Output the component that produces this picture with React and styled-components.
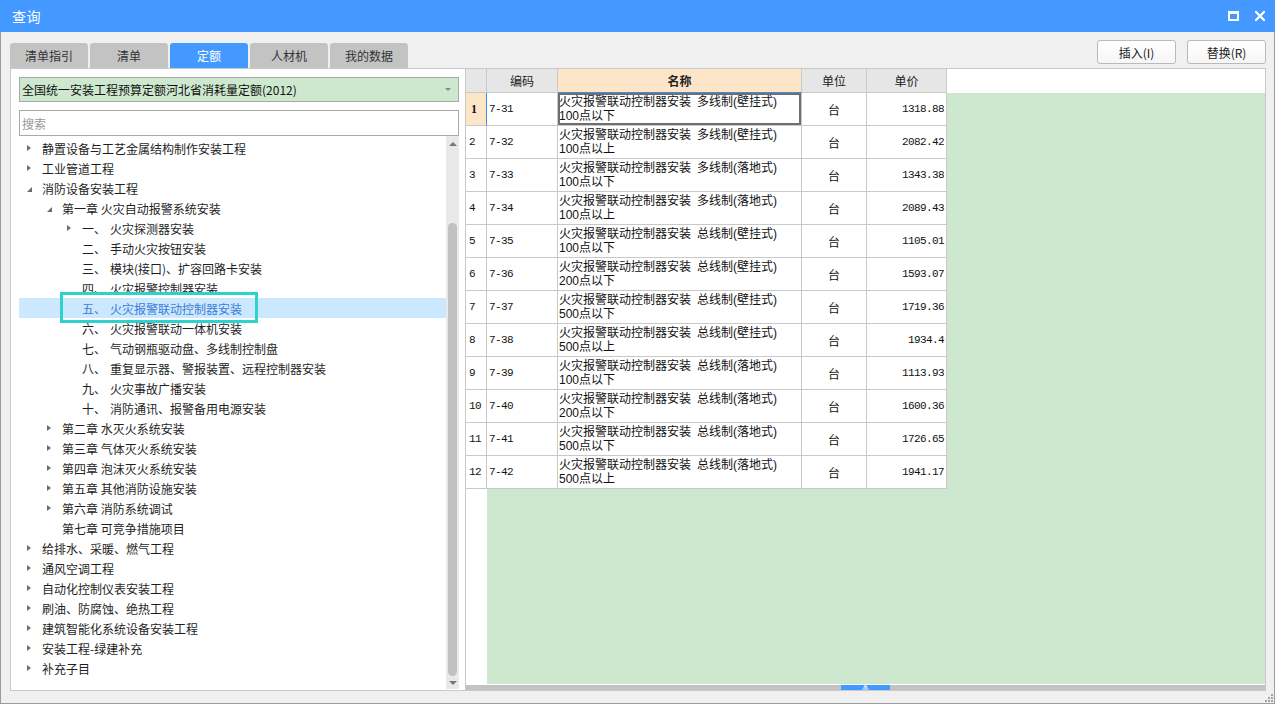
import React from "react";
import styled, { createGlobalStyle, css } from "styled-components";

const GlobalStyle = createGlobalStyle`
  html, body { margin: 0; padding: 0; background: #f0f0f0; }
  body {
    width: 1275px; height: 704px; overflow: hidden;
    font-family: "Noto Sans CJK SC", "Noto Sans", sans-serif;
    font-size: 12px; color: #222;
  }
  * { box-sizing: border-box; }
`;

const Window = styled.div`
  width: 1275px;
  height: 704px;
  display: flex;
  flex-direction: column;
  background: #f0f0f0;
  border: 1px solid #9c9c9c;
  border-top: none;
`;

const TitleBar = styled.div`
  height: 32px;
  flex: none;
  background: #4399ff;
  display: flex;
  align-items: center;
  justify-content: space-between;
  padding: 0 8px 0 12px;
  color: #fff;
  margin: 0 -1px;
`;

const TitleText = styled.div`
  font-size: 14px;
  color: #fff;
  letter-spacing: 0.5px;
`;

const TitleIcons = styled.div`
  display: flex;
  align-items: center;
  gap: 16px;
  padding-right: 2px;
`;

const Body = styled.div`
  flex: 1;
  display: flex;
  flex-direction: column;
  padding: 0 8px 0 9px;
  min-height: 0;
`;

const TopRow = styled.div`
  height: 36px;
  flex: none;
  display: flex;
  align-items: flex-end;
  justify-content: space-between;
`;

const Tabs = styled.div`
  display: flex;
  gap: 2px;
`;

const Tab = styled.div`
  width: 78px;
  height: 25px;
  border-radius: 3px 3px 0 0;
  display: flex;
  align-items: center;
  justify-content: center;
  font-size: 12px;
  background: #c3c3c3;
  color: #333;
  ${(p) =>
    p.$active &&
    css`
      background: #4399ff;
      color: #fff;
    `}
`;

const Buttons = styled.div`
  display: flex;
  gap: 11px;
  margin-bottom: 4px;
`;

const Button = styled.div`
  width: 79px;
  height: 24px;
  border: 1px solid #bababa;
  border-radius: 3px;
  background: linear-gradient(#ffffff, #f6f6f6);
  display: flex;
  align-items: center;
  justify-content: center;
  font-size: 12px;
  color: #222;
`;

const Panels = styled.div`
  height: 623px;
  flex: none;
  display: flex;
`;

const LeftPanel = styled.div`
  width: 455px;
  flex: none;
  background: #fff;
  border: 1px solid #c8c8c8;
  border-right: none;
  display: flex;
  flex-direction: column;
  padding: 8px 6px 0 8px;
`;

const Dropdown = styled.div`
  height: 25px;
  flex: none;
  background: #cde8cf;
  border: 1px solid #a9a9a9;
  display: flex;
  align-items: center;
  justify-content: space-between;
  padding: 0 7px 0 2px;
  font-size: 12px;
  color: #111;
`;

const Caret = styled.span`
  width: 0;
  height: 0;
  border-left: 3px solid transparent;
  border-right: 3px solid transparent;
  border-top: 3px solid #8a8a8a;
`;

const Search = styled.div`
  height: 26px;
  flex: none;
  margin-top: 8px;
  background: #fff;
  border: 1px solid #a9a9a9;
  display: flex;
  align-items: center;
  padding-left: 2px;
  color: #9a9a9a;
  font-size: 12px;
`;

const TreeWrap = styled.div`
  flex: 1;
  display: flex;
  min-height: 0;
  margin-bottom: 1px;
`;

const TreeList = styled.div`
  flex: 1;
  padding-top: 2px;
  overflow: hidden;
`;

const TreeRow = styled.div`
  position: relative;
  height: 20px;
  display: flex;
  align-items: center;
  padding-left: ${(p) => 7 + p.$level * 20}px;
  font-size: 12px;
  color: #1e1e1e;
  white-space: nowrap;
  ${(p) =>
    p.$selected &&
    css`
      background: #cce8ff;
      color: #3d7cd6;
    `}
`;

const ArrowBox = styled.span`
  width: 16px;
  flex: none;
  height: 20px;
  display: flex;
  align-items: center;
`;

const ArrowRight = styled.span`
  width: 0;
  height: 0;
  border-left: 4px solid #6e6e6e;
  border-top: 3.5px solid transparent;
  border-bottom: 3.5px solid transparent;
  margin-left: 1px;
`;

const ArrowDown = styled.span`
  width: 0;
  height: 0;
  border-bottom: 5px solid #6a6a6a;
  border-left: 5px solid transparent;
  margin-left: 1px;
  margin-top: 3px;
`;

const Num = styled.span`
  width: 28px;
  flex: none;
`;

const Annotation = styled.div`
  position: absolute;
  left: 41px;
  top: -6px;
  width: 198px;
  height: 31px;
  border: 3px solid #2dd2ca;
  pointer-events: none;
`;

const VScroll = styled.div`
  width: 13px;
  flex: none;
  background: #e9e9e9;
  display: flex;
  flex-direction: column;
`;

const ScrollArrow = styled.div`
  height: ${(p) => p.$h}px;
  flex: none;
  display: flex;
  align-items: center;
  justify-content: center;
`;

const UpTri = styled.span`
  width: 0;
  height: 0;
  border-left: 4px solid transparent;
  border-right: 4px solid transparent;
  border-bottom: 4px solid #777;
`;

const DownTri = styled.span`
  width: 0;
  height: 0;
  border-left: 4px solid transparent;
  border-right: 4px solid transparent;
  border-top: 4px solid #777;
`;

const ThumbTrack = styled.div`
  flex: 1;
  display: flex;
  flex-direction: column;
  padding: 71px 2px 1px 2px;
`;

const Thumb = styled.div`
  flex: 1;
  background: #c1c1c1;
  border-radius: 5px;
`;

const RightPanel = styled.div`
  flex: 1;
  background: #fff;
  border: 1px solid #c8c8c8;
  display: flex;
  flex-direction: column;
`;

const GridArea = styled.div`
  flex: 1;
  display: flex;
  min-height: 0;
`;

const RowNumCol = styled.div`
  width: 21px;
  flex: none;
  display: flex;
  flex-direction: column;
  background: #fff;
`;

const HeadCell = styled.div`
  height: 24px;
  flex: none;
  width: ${(p) => p.$w}px;
  background: ${(p) => (p.$hl ? "#fde5c7" : "#e6e6e6")};
  border-right: 1px solid #c9c9c9;
  border-bottom: 1px solid ${(p) => (p.$hl ? "#3b8de8" : "#c9c9c9")};
  display: flex;
  align-items: center;
  justify-content: center;
  font-size: 12px;
  color: #222;
  font-weight: ${(p) => (p.$hl ? 700 : 400)};
`;

const RowNum = styled.div`
  height: 33px;
  flex: none;
  border-right: 1px solid ${(p) => (p.$active ? "#3b8de8" : "#c9c9c9")};
  border-bottom: 1px solid #c9c9c9;
  background: ${(p) => (p.$active ? "#fde5c7" : "#fff")};
  display: flex;
  align-items: center;
  padding-left: ${(p) => (p.$active ? 5 : 3)}px;
  font-family: ${(p) => (p.$active ? '"Liberation Serif", serif' : '"Liberation Mono", monospace')};
  font-size: ${(p) => (p.$active ? 12 : 11)}px;
  letter-spacing: ${(p) => (p.$active ? 0 : -0.6)}px;
  font-weight: ${(p) => (p.$active ? 700 : 400)};
  color: #111;
`;

const DataCol = styled.div`
  flex: 1;
  display: flex;
  flex-direction: column;
  min-width: 0;
`;

const HeaderRow = styled.div`
  display: flex;
  flex: none;
  background: #fff;
`;

const GridBody = styled.div`
  flex: 1;
  background: #cde8cf;
  display: flex;
  flex-direction: column;
`;

const Row = styled.div`
  display: flex;
  height: 33px;
  flex: none;
`;

const Cell = styled.div`
  width: ${(p) => p.$w}px;
  flex: none;
  background: #fff;
  border-right: 1px solid #c9c9c9;
  border-bottom: 1px solid #c9c9c9;
  display: flex;
  align-items: center;
  color: #111;
  justify-content: ${(p) => p.$align || "flex-start"};
  padding: ${(p) => p.$pad || "0 2px"};
  ${(p) =>
    p.$mono &&
    css`
      font-family: "Liberation Mono", monospace;
      font-size: 11px;
      letter-spacing: -0.6px;
    `}
  ${(p) =>
    p.$selected &&
    css`
      box-shadow: inset 0 0 0 2px #6f6f6f;
    `}
`;

const NameText = styled.div`
  display: flex;
  flex-direction: column;
  font-family: "Liberation Sans", "Noto Sans CJK SC", sans-serif;
  font-size: 12px;
  white-space: nowrap;
  padding-top: 1px;
`;

const NameLine = styled.div`
  height: 13.5px;
  line-height: 13.5px;
`;

const UnitText = styled.span`
  font-size: 12px;
`;

const HScroll = styled.div`
  height: 5px;
  flex: none;
  margin-top: 1px;
  background: #c3c3c3;
  display: flex;
  justify-content: center;
`;

const HThumb = styled.div`
  width: 49px;
  background: #4399ff;
  display: flex;
  align-items: center;
  justify-content: center;
`;

const Footer = styled.div`
  flex: 1;
  display: flex;
  justify-content: flex-end;
  align-items: flex-end;
  padding-bottom: 1px;
  margin-right: -7px;
`;

const treeData = [
  { level: 0, arrow: "right", text: "静置设备与工艺金属结构制作安装工程" },
  { level: 0, arrow: "right", text: "工业管道工程" },
  { level: 0, arrow: "down", text: "消防设备安装工程" },
  { level: 1, arrow: "down", text: "第一章 火灾自动报警系统安装" },
  { level: 2, arrow: "right", num: "一、", text: "火灾探测器安装" },
  { level: 2, num: "二、", text: "手动火灾按钮安装" },
  { level: 2, num: "三、", text: "模块(接口)、扩容回路卡安装" },
  { level: 2, num: "四、", text: "火灾报警控制器安装" },
  { level: 2, num: "五、", text: "火灾报警联动控制器安装", selected: true },
  { level: 2, num: "六、", text: "火灾报警联动一体机安装" },
  { level: 2, num: "七、", text: "气动钢瓶驱动盘、多线制控制盘" },
  { level: 2, num: "八、", text: "重复显示器、警报装置、远程控制器安装" },
  { level: 2, num: "九、", text: "火灾事故广播安装" },
  { level: 2, num: "十、", text: "消防通讯、报警备用电源安装" },
  { level: 1, arrow: "right", text: "第二章 水灭火系统安装" },
  { level: 1, arrow: "right", text: "第三章 气体灭火系统安装" },
  { level: 1, arrow: "right", text: "第四章 泡沫灭火系统安装" },
  { level: 1, arrow: "right", text: "第五章 其他消防设施安装" },
  { level: 1, arrow: "right", text: "第六章 消防系统调试" },
  { level: 1, text: "第七章 可竞争措施项目" },
  { level: 0, arrow: "right", text: "给排水、采暖、燃气工程" },
  { level: 0, arrow: "right", text: "通风空调工程" },
  { level: 0, arrow: "right", text: "自动化控制仪表安装工程" },
  { level: 0, arrow: "right", text: "刷油、防腐蚀、绝热工程" },
  { level: 0, arrow: "right", text: "建筑智能化系统设备安装工程" },
  { level: 0, arrow: "right", text: "安装工程-绿建补充" },
  { level: 0, arrow: "right", text: "补充子目" },
];

const rows = [
  ["7-31", "多线制(壁挂式)", "100点以下", "1318.88"],
  ["7-32", "多线制(壁挂式)", "100点以上", "2082.42"],
  ["7-33", "多线制(落地式)", "100点以下", "1343.38"],
  ["7-34", "多线制(落地式)", "100点以上", "2089.43"],
  ["7-35", "总线制(壁挂式)", "100点以下", "1105.01"],
  ["7-36", "总线制(壁挂式)", "200点以下", "1593.07"],
  ["7-37", "总线制(壁挂式)", "500点以下", "1719.36"],
  ["7-38", "总线制(壁挂式)", "500点以上", "1934.4"],
  ["7-39", "总线制(落地式)", "100点以下", "1113.93"],
  ["7-40", "总线制(落地式)", "200点以下", "1600.36"],
  ["7-41", "总线制(落地式)", "500点以下", "1726.65"],
  ["7-42", "总线制(落地式)", "500点以上", "1941.17"],
];

const COLS = { code: 71, name: 244, unit: 65, price: 80 };

function MaxIcon() {
  return (
    <svg width="11" height="10" viewBox="0 0 11 10">
      <rect x="1" y="1.5" width="9" height="7.5" fill="none" stroke="#fff" strokeWidth="2" />
      <rect x="0" y="0" width="11" height="3" fill="#fff" />
    </svg>
  );
}

function CloseIcon() {
  return (
    <svg width="10" height="10" viewBox="0 0 10 10">
      <path d="M1 1 L9 9 M9 1 L1 9" stroke="#fff" strokeWidth="2.2" strokeLinecap="square" />
    </svg>
  );
}

function Grip() {
  const dots = [
    [6, 0],
    [3, 3],
    [6, 3],
    [0, 6],
    [3, 6],
    [6, 6],
  ];
  return (
    <svg width="8" height="8" viewBox="0 0 8 8">
      {dots.map(([x, y], i) => (
        <rect key={i} x={x} y={y} width="2" height="2" fill="#a3a3a3" />
      ))}
    </svg>
  );
}

function HUpGlyph() {
  return (
    <svg width="7" height="5" viewBox="0 0 7 5">
      <path d="M3.5 0 L6 2.5 L1 2.5 Z" fill="#fff" />
      <rect x="0.5" y="3.5" width="6" height="1" fill="#fff" />
    </svg>
  );
}

export default function App() {
  return (
    <>
      <GlobalStyle />
      <Window>
        <TitleBar>
          <TitleText>查询</TitleText>
          <TitleIcons>
            <MaxIcon />
            <CloseIcon />
          </TitleIcons>
        </TitleBar>
        <Body>
          <TopRow>
            <Tabs>
              <Tab>清单指引</Tab>
              <Tab>清单</Tab>
              <Tab $active>定额</Tab>
              <Tab>人材机</Tab>
              <Tab>我的数据</Tab>
            </Tabs>
            <Buttons>
              <Button>插入(I)</Button>
              <Button>替换(R)</Button>
            </Buttons>
          </TopRow>
          <Panels>
            <LeftPanel>
              <Dropdown>
                <span>全国统一安装工程预算定额河北省消耗量定额(2012)</span>
                <Caret />
              </Dropdown>
              <Search>搜索</Search>
              <TreeWrap>
                <TreeList>
                  {treeData.map((n, i) => (
                    <TreeRow key={i} $level={n.level} $selected={n.selected}>
                      <ArrowBox>
                        {n.arrow === "right" && <ArrowRight />}
                        {n.arrow === "down" && <ArrowDown />}
                      </ArrowBox>
                      {n.num && <Num>{n.num}</Num>}
                      <span>{n.text}</span>
                      {n.selected && <Annotation />}
                    </TreeRow>
                  ))}
                </TreeList>
                <VScroll>
                  <ScrollArrow $h={16}>
                    <UpTri />
                  </ScrollArrow>
                  <ThumbTrack>
                    <Thumb />
                  </ThumbTrack>
                  <ScrollArrow $h={12}>
                    <DownTri />
                  </ScrollArrow>
                </VScroll>
              </TreeWrap>
            </LeftPanel>
            <RightPanel>
              <GridArea>
                <RowNumCol>
                  <HeadCell $w={21} />
                  {rows.map((r, i) => (
                    <RowNum key={i} $active={i === 0}>
                      {i + 1}
                    </RowNum>
                  ))}
                </RowNumCol>
                <DataCol>
                  <HeaderRow>
                    <HeadCell $w={COLS.code}>编码</HeadCell>
                    <HeadCell $w={COLS.name} $hl>
                      名称
                    </HeadCell>
                    <HeadCell $w={COLS.unit}>单位</HeadCell>
                    <HeadCell $w={COLS.price}>单价</HeadCell>
                  </HeaderRow>
                  <GridBody>
                    {rows.map((r, i) => (
                      <Row key={i}>
                        <Cell $w={COLS.code} $mono>
                          {r[0]}
                        </Cell>
                        <Cell $w={COLS.name} $pad="0 1px" $selected={i === 0}>
                          <NameText>
                            <NameLine>{"火灾报警联动控制器安装\u2002" + r[1]}</NameLine>
                            <NameLine>{r[2]}</NameLine>
                          </NameText>
                        </Cell>
                        <Cell $w={COLS.unit} $align="center">
                          <UnitText>台</UnitText>
                        </Cell>
                        <Cell $w={COLS.price} $align="flex-end" $mono>
                          {r[3]}
                        </Cell>
                      </Row>
                    ))}
                  </GridBody>
                </DataCol>
              </GridArea>
              <HScroll>
                <HThumb>
                  <HUpGlyph />
                </HThumb>
              </HScroll>
            </RightPanel>
          </Panels>
          <Footer>
            <Grip />
          </Footer>
        </Body>
      </Window>
    </>
  );
}
